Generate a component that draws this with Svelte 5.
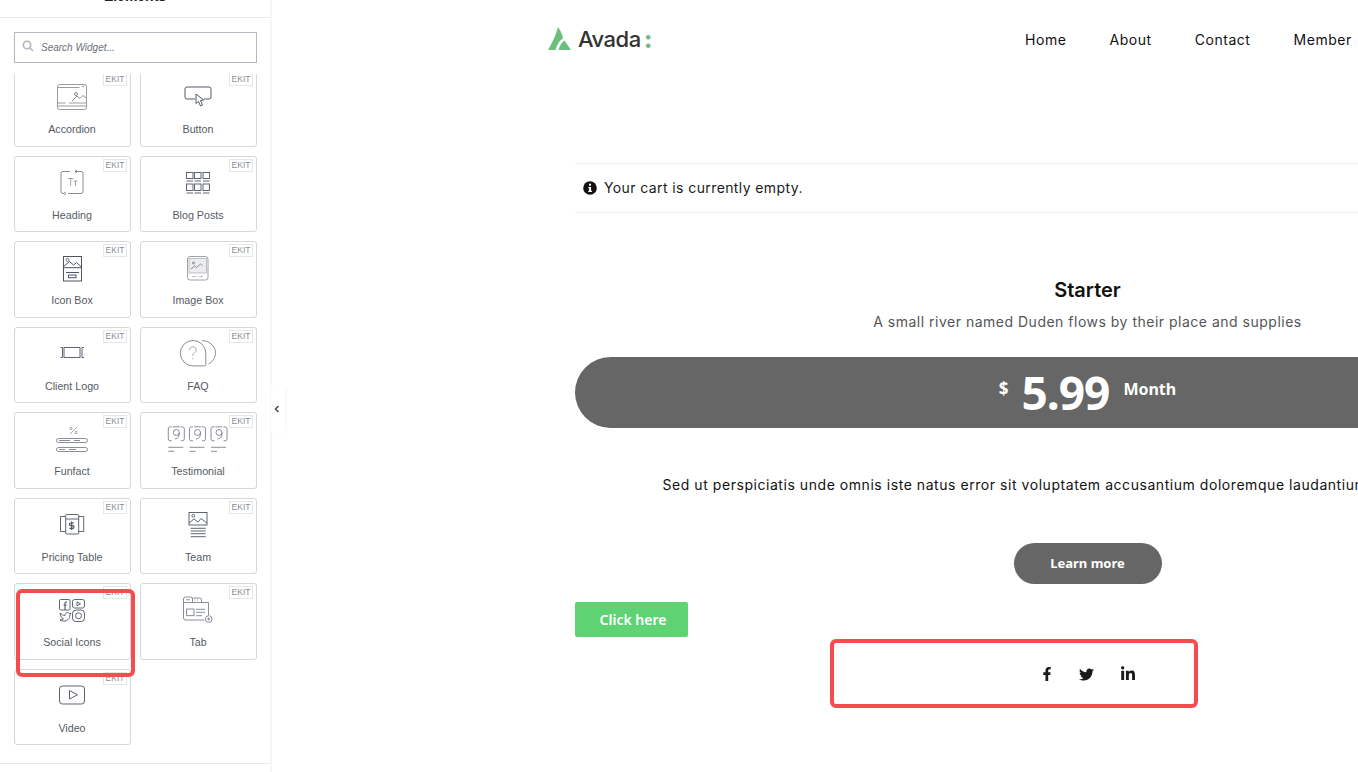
<script lang="ts">
  const widgets = [
    { name: "Accordion", icon: "accordion" },
    { name: "Button", icon: "button" },
    { name: "Heading", icon: "heading" },
    { name: "Blog Posts", icon: "blog" },
    { name: "Icon Box", icon: "iconbox" },
    { name: "Image Box", icon: "imagebox" },
    { name: "Client Logo", icon: "client" },
    { name: "FAQ", icon: "faq" },
    { name: "Funfact", icon: "funfact" },
    { name: "Testimonial", icon: "testimonial" },
    { name: "Pricing Table", icon: "pricing" },
    { name: "Team", icon: "team" },
    { name: "Social Icons", icon: "social" },
    { name: "Tab", icon: "tab" },
    { name: "Video", icon: "video" }
  ];
  const navItems = ["Home", "About", "Contact", "Member"];
  const counters = [27.3, 48.5, 70];
</script>

<div class="page">
  <aside class="sidebar">
    <div class="sidebar-title"><span>Elements</span></div>
    <div class="search">
      <svg width="12" height="12" viewBox="0 0 12 12" fill="none" stroke="#b4b7bb" stroke-width="1.6">
        <circle cx="5" cy="5" r="3.7" />
        <path d="M8 8l3 3" />
      </svg>
      <span>Search Widget...</span>
    </div>
    <div class="widget-scroll">
      <div class="widget-grid">
        {#each widgets as widget (widget.name)}
          <div class="widget">
            <span class="badge">EKIT</span>
            <svg class="widget-icon" width="115" height="50" viewBox="0 0 115 50" fill="none" stroke="#6b727d" stroke-width="0.8">
              {#if widget.icon === "accordion"}
                <rect x="42.5" y="13.5" width="29" height="25" rx="2" stroke="#7d848e" />
                <path d="M42.5 16.5h22M42.5 35h29M42.5 32h8M54 32h17" stroke="#7d848e" />
                <path d="M57 30l5-5 3 2.500 3-3 3 2.500" />
                <circle cx="61" cy="23" r="1.500" />
                <path d="M67 14.800l1.300 1 1.300-1" />
              {:else if widget.icon === "button"}
                <path d="M54 28h-8a2 2 0 0 1-2-2v-8a2 2 0 0 1 2-2h22a2 2 0 0 1 2 2v8a2 2 0 0 1-2 2h-5" stroke="#525a66" stroke-width="1" />
                <path d="M55 23v9.500l2.500-2 2 4.500 2-1-2-4.500 3.200-.5z" stroke="#525a66" stroke-width="1" />
              {:else if widget.icon === "heading"}
                <path d="M60 14.500h6a2 2 0 0 1 2 2v18a2 2 0 0 1-2 2H53M55 14.500h-7a2 2 0 0 0-2 2v18a2 2 0 0 0 2 2h1" />
                <path d="M62 13l-2 1.500 2 1.500M49 35l2 1.500-2 1.500" />
                <path d="M53 21.500h5.500M55.700 21.500V29M58.500 24h4M60.500 24v5" stroke="#8a9099" />
              {:else if widget.icon === "blog"}
                <g stroke="#4e5663" stroke-width="0.9">
                  <rect x="45.500" y="15.500" width="6.500" height="6" />
                  <rect x="53.500" y="15.500" width="6.500" height="6" />
                  <rect x="62" y="15.500" width="6.500" height="6" />
                  <path d="M45.500 24h6.500M53.500 24h6.500M62 24h6.500" />
                  <rect x="45.500" y="27" width="6.500" height="6.500" />
                  <rect x="53.500" y="27" width="6.500" height="6.500" />
                  <rect x="62" y="27" width="6.500" height="6.500" />
                  <path d="M45.500 36h6.500M53.500 36h6.500M62 36h6.500" />
                </g>
              {:else if widget.icon === "iconbox"}
                <g stroke="#4e5663" stroke-width="1">
                  <rect x="48.500" y="14.500" width="18" height="24.500" />
                  <path d="M48.500 25.700h18M48.500 24.500l6-5 4 3.500 3-2.500 5 4.500M51 30.500h13" />
                  <circle cx="52.500" cy="17.800" r="1.500" stroke-width="0.8" />
                  <rect x="53.500" y="33" width="7.500" height="2.700" />
                </g>
              {:else if widget.icon === "imagebox"}
                <rect x="46.500" y="14.500" width="20.500" height="23.500" rx="2.500" stroke="#858b94" />
                <rect x="48" y="16.500" width="17.500" height="14.500" fill="#ececee" stroke="#b0b4ba" />
                <path d="M50 27l3.500-3 2 1.500 4-3.500 2 1.500" stroke="#6b727d" />
                <circle cx="52.500" cy="21" r="1" />
                <path d="M51 34.500h4M58 34.500h4" stroke="#aab0b6" />
              {:else if widget.icon === "client"}
                <g stroke="#4e5663" stroke-width="0.9">
                  <rect x="49" y="19.500" width="16" height="10" />
                  <path d="M45.500 19.500H47.500v10H45.500M69 19.500H67v10H69" />
                </g>
              {:else if widget.icon === "faq"}
                <path d="M52 12.500a12.700 12.700 0 1 0 0 25.400h11.500a1.300 1.300 0 0 0 1.300-1.300V25.200A12.700 12.700 0 0 0 52 12.500z" />
                <path d="M61 12.500c8 .5 13.500 6 13.500 12 0 5.500-3 9.500-7 11.500" />
                <path d="M48.500 22a3.300 3.300 0 1 1 5 2.800c-1.300.8-1.800 1.500-1.800 3M51.700 30v1.200" stroke="#8b919a" />
              {:else if widget.icon === "funfact"}
                <rect x="41.500" y="25.500" width="31" height="4" rx="2" />
                <rect x="41.500" y="34.500" width="31" height="4" rx="2" />
                <path d="M55 21l7-7" stroke="#8b919a" />
                <circle cx="56" cy="15.500" r="1.200" stroke="#8b919a" />
                <circle cx="61" cy="19.500" r="1.200" stroke="#8b919a" />
                <path d="M44 27.500h11M59 27.500h6M44 36.500h6M54 36.500h7" />
              {:else if widget.icon === "testimonial"}
                {#each counters as x}
                  <g transform="translate({x} 0)">
                    <path d="M3.500 13.800H2a2 2 0 0 0-2 2v10a2 2 0 0 0 2 2h1.500M12.500 13.800H14a2 2 0 0 1 2 2v10a2 2 0 0 1-2 2h-1.500M4.500 13.800h7" />
                    <circle cx="8" cy="19.500" r="3" />
                    <path d="M11 19.500c0 4-1 6-4.500 6.500" />
                    <path d="M0 34.300h15M0 38.300h6" />
                  </g>
                {/each}
              {:else if widget.icon === "pricing"}
                <g stroke="#4e5663" stroke-width="0.9">
                  <path d="M50.700 17.500H45.500v15h5.200M63.700 17.500h5v15h-5" />
                  <rect x="50.700" y="15.500" width="13" height="19.500" rx="1" />
                  <path d="M50.700 20h13" />
                  <path d="M59 24h-3.200a1.300 1.300 0 0 0 0 2.700h1.800a1.300 1.300 0 0 1 0 2.700h-3.200M56.700 22.500V31" stroke-width="1.200" />
                </g>
              {:else if widget.icon === "team"}
                <g stroke="#4e5663" stroke-width="0.9">
                  <rect x="48" y="13.500" width="18" height="12.500" />
                  <path d="M48 24l5-4 4 3 3-3.500 6 4.500M49.700 29.300h15M49.700 32h15M49.700 34.700h15M49.700 37.700h15" />
                  <circle cx="52.300" cy="16.700" r="1.400" />
                </g>
              {:else if widget.icon === "social"}
                <g stroke="#4e5663" stroke-width="0.9">
                  <rect x="44.500" y="15.500" width="10.500" height="10.500" rx="1.200" />
                  <path d="M52 18h-1a1 1 0 0 0-1 1v7M48.500 21h3" stroke-width="1.100" />
                  <rect x="57.500" y="15.500" width="12" height="8.500" rx="2" />
                  <path d="M62 17.800l3.500 2-3.500 2z" />
                  <path d="M45 29c1.800 1.800 3.500 2.500 5 2.500 0-2.500 2.800-4 4.500-2l1.500-.5-1 1.700c0 4-3.200 6.500-6 6.500-1.500 0-3-.5-4-1.200 1.500 0 2.700-.4 3.500-1.200-1.800-.6-3.300-3-3.500-5.800z" />
                  <rect x="57.500" y="26" width="12" height="11.500" rx="3.500" />
                  <circle cx="63.500" cy="31.800" r="3" />
                </g>
              {:else if widget.icon === "tab"}
                <path d="M42.500 18.500h25M42.500 15a2 2 0 0 1 2-2h5a2 2 0 0 1 2 2v3.500M51.500 14h7a2 2 0 0 1 2 2v2.500M42.500 15v19a2 2 0 0 0 2 2h19M67.500 18.500V31" />
                <path d="M45 15.800h4M53.500 16h1M56 16h1" />
                <rect x="45.700" y="25" width="7.300" height="6.700" />
                <path d="M55 25.300h9M55 28.300h9M55 31.700h6" />
                <circle cx="67.700" cy="35" r="3.300" fill="#fff" />
                <path d="M67.700 33.500v3M66.200 35h3" />
              {:else if widget.icon === "video"}
                <rect x="44.500" y="16" width="25" height="18" rx="3" stroke="#5a6270" stroke-width="1" />
                <path d="M54.500 20.500l8 4.300-8 4.200z" stroke="#5a6270" stroke-width="1" />
              {/if}
            </svg>
            <span class="widget-name">{widget.name}</span>
          </div>
        {/each}
      </div>
    </div>
    <div class="sidebar-foot"></div>
  </aside>

  <button class="collapse" aria-label="Collapse">
    <svg width="6" height="8" viewBox="0 0 6 8" fill="none" stroke="#444c56" stroke-width="1.5">
      <path d="M4.500 1L1.500 4l3 3" />
    </svg>
  </button>

  <main class="main">
    <header class="topbar">
      <div class="logo">
        <svg width="24" height="24" viewBox="0 0 24 24">
          <path d="M10 0c2.500 3.500 4.500 7.500 5 11.500-3.500 2-6 6-7.500 11.500H0C4 16 8 8 10 0z" fill="#6cc07d" />
          <path d="M16.500 13.500L23 23H10.500c1-4 3-7.500 6-9.500z" fill="#6cc07d" />
        </svg>
        <span class="logo-word">Avada</span><span class="logo-dot">:</span>
      </div>
      <nav class="nav">
        {#each navItems as item}
          <span>{item}</span>
        {/each}
      </nav>
    </header>

    <div class="content">
      <div class="cart-notice">
        <svg width="14" height="14" viewBox="0 0 14 14">
          <circle cx="7" cy="7" r="6.800" fill="#111" />
          <rect x="6" y="2.700" width="2" height="2" fill="#fff" />
          <path d="M5.300 6h2.800v3.800h.8v1.200H5.300V9.800h.8V7.200h-.8z" fill="#fff" />
        </svg>
        <span>Your cart is currently empty.</span>
      </div>

      <section class="plan">
        <h2>Starter</h2>
        <p class="plan-sub">A small river named Duden flows by their place and supplies</p>
        <div class="price-bar">
          <span class="currency">$</span>
          <span class="amount">5.99</span>
          <span class="period">Month</span>
        </div>
        <p class="plan-text">Sed ut perspiciatis unde omnis iste natus error sit voluptatem accusantium doloremque laudantium, totam rem aperiam</p>
        <a class="learn" href="#learn">Learn more</a>
      </section>

      <a class="click" href="#click">Click here</a>

      <div class="social">
        <svg width="14" height="14" viewBox="0 0 320 512" fill="#1a1a1a">
          <path d="M279 288l14-93h-89v-60c0-25 12-50 52-50h41V6s-37-6-72-6c-73 0-121 44-121 125v70H23v93h81v224h100V288z" />
        </svg>
        <svg width="15" height="15" viewBox="0 0 512 512" fill="#1a1a1a">
          <path d="M459 152c.3 4.500.3 9 .3 13.600 0 138.700-105.600 298.600-298.600 298.600-59.500 0-114.700-17.200-161.100-47.100 8.400 1 16.600 1.300 25.300 1.300 49.100 0 94.200-16.600 130.300-44.800-46.100-1-84.800-31.200-98.100-72.800 6.500 1 13 1.600 19.800 1.600 9.400 0 18.800-1.300 27.600-3.600-48.100-9.700-84.100-52-84.100-103v-1.300c14 7.800 30.200 12.700 47.400 13.300-28.300-18.800-46.800-51-46.800-87.400 0-19.500 5.200-37.400 14.300-53 51.700 63.700 129.300 105.300 216.400 109.800-1.600-7.800-2.600-15.900-2.600-24 0-57.800 46.800-104.900 104.900-104.900 30.200 0 57.500 12.700 76.700 33.100 23.700-4.500 46.500-13.300 66.600-25.300-7.800 24.200-24.400 44.800-46.100 57.800 21.100-2.300 41.600-8.100 60.400-16.200-14.300 20.800-32.200 39.300-52.600 54.200z" />
        </svg>
        <svg width="16" height="16" viewBox="0 0 448 512" fill="#1a1a1a">
          <path d="M100 448H7V149h93zM54 108C24 108 0 83 0 54a54 54 0 0 1 107 0c0 29-24 54-53 54zm394 340h-93V302c0-35-1-79-48-79-48 0-56 38-56 77v148h-93V149h89v41h1c12-24 43-48 88-48 94 0 111 62 111 142z" />
        </svg>
      </div>
    </div>
  </main>

  <div class="mark mark-widget"></div>
  <div class="mark mark-social"></div>
</div>

<style>
  :global(body) {
    margin: 0;
    background: #fff;
    overflow: hidden;
  }

  .page {
    position: relative;
    display: flex;
    width: 1358px;
    height: 772px;
    overflow: hidden;
    background: #fff;
  }

  .sidebar {
    display: flex;
    flex-direction: column;
    flex: none;
    width: 272px;
    height: 772px;
    box-sizing: border-box;
    border-right: 2px solid #f5f6f7;
    font-family: "Liberation Sans", Arial, sans-serif;
  }

  .sidebar-title {
    display: flex;
    justify-content: center;
    align-items: flex-end;
    height: 18px;
    box-sizing: border-box;
    border-bottom: 1px solid #e6e8ea;
    overflow: hidden;
  }

  .sidebar-title span {
    margin-bottom: 13px;
    font-size: 14px;
    font-weight: 700;
    line-height: 16px;
    color: #222;
  }

  .search {
    display: flex;
    align-items: center;
    gap: 7px;
    box-sizing: content-box;
    width: 234px;
    height: 29px;
    margin: 14px 0 0 14px;
    padding: 0 0 0 7px;
    border: 1px solid #b1b8c1;
    font-size: 10px;
    font-style: italic;
    color: #6b6f75;
  }

  .search svg {
    margin-top: -4px;
  }

  .widget-scroll {
    flex: none;
    height: 689px;
    margin-top: 11px;
    overflow: hidden;
  }

  .widget-grid {
    display: grid;
    grid-template-columns: 117px 117px;
    grid-auto-rows: 76.5px;
    gap: 9px;
    margin: -4px 0 0 14px;
  }

  .widget {
    position: relative;
    box-sizing: border-box;
    border: 1px solid #d5d8dc;
    border-radius: 3px;
    background: #fff;
  }

  .badge {
    position: absolute;
    top: 2px;
    right: 3px;
    width: 22px;
    height: 11px;
    border: 1px solid #e4e6e8;
    font-size: 8.5px;
    line-height: 11px;
    text-align: center;
    color: #8a8e94;
  }

  .widget-icon {
    position: absolute;
    top: 0;
    left: 0;
  }

  .widget-name {
    position: absolute;
    top: 51px;
    left: 0;
    right: 1px;
    font-size: 10.7px;
    line-height: 14px;
    text-align: center;
    color: #555b64;
  }

  .sidebar-foot {
    border-top: 1px solid #e6e8ea;
  }

  .collapse {
    position: absolute;
    left: 271px;
    top: 386px;
    display: flex;
    align-items: center;
    justify-content: center;
    width: 14px;
    height: 46px;
    padding: 0 2px 0 0;
    border: 0;
    border-radius: 0 3px 3px 0;
    background: #fff;
    box-shadow: 2px 0 3px rgba(0, 0, 0, 0.03);
  }

  .main {
    flex: none;
    width: 1086px;
    overflow: hidden;
    font-family: Inter, "Liberation Sans", sans-serif;
    color: #111;
  }

  .topbar {
    display: flex;
    align-items: center;
    height: 78px;
    padding-left: 276px;
  }

  .logo {
    display: flex;
    flex: none;
    align-items: center;
    width: 477px;
  }

  .logo svg {
    margin-right: 6px;
  }

  .logo-word {
    font-size: 22px;
    font-weight: 500;
    letter-spacing: -0.5px;
    color: #333;
  }

  .logo-dot {
    margin-left: 3px;
    font-size: 25px;
    font-weight: 800;
    line-height: 22px;
    color: #6cc07d;
  }

  .nav {
    display: flex;
    flex: none;
    gap: 43px;
    font-size: 14px;
    font-weight: 400;
    letter-spacing: 0.55px;
    white-space: nowrap;
  }

  .content {
    width: 1025px;
    margin: 85px 0 0 303px;
  }

  .cart-notice {
    display: flex;
    align-items: center;
    gap: 7px;
    box-sizing: content-box;
    height: 47px;
    padding: 0 0 1px 8px;
    border-top: 1px solid #f0f0f0;
    border-bottom: 1px solid #f0f0f0;
    font-size: 14px;
    letter-spacing: 0.4px;
    color: #1a1a1a;
  }

  .plan {
    display: flex;
    flex-direction: column;
    align-items: center;
    margin-top: 64px;
  }

  .plan h2 {
    margin: 0;
    font-size: 20px;
    font-weight: 600;
    line-height: 26px;
    color: #111;
  }

  .plan-sub {
    margin: 9px 0 0;
    font-size: 14px;
    line-height: 20px;
    letter-spacing: 0.5px;
    color: #555;
  }

  .price-bar {
    display: flex;
    align-items: center;
    justify-content: center;
    width: 100%;
    height: 71px;
    margin-top: 25px;
    border-radius: 36px;
    background: #666;
    color: #fff;
    font-family: "Noto Sans", sans-serif;
  }

  .currency {
    margin: -8px 13px 0 0;
    font-size: 17px;
    font-weight: 700;
  }

  .amount {
    font-size: 46px;
    font-weight: 700;
    line-height: 71px;
    letter-spacing: -1px;
  }

  .period {
    margin: -8px 0 0 14px;
    font-size: 16px;
    font-weight: 700;
  }

  .plan-text {
    width: 850px;
    margin: 46px 0 0;
    font-size: 14px;
    line-height: 22px;
    letter-spacing: 0.55px;
    white-space: nowrap;
    color: #111;
  }

  .learn {
    display: flex;
    align-items: center;
    justify-content: center;
    box-sizing: border-box;
    width: 148px;
    height: 41px;
    margin-top: 47px;
    padding-bottom: 1px;
    border-radius: 21px;
    background: #666;
    color: #fff;
    font-family: "Noto Sans", sans-serif;
    font-size: 13px;
    font-weight: 700;
    text-decoration: none;
  }

  .click {
    display: flex;
    align-items: center;
    justify-content: center;
    box-sizing: border-box;
    width: 113px;
    height: 35px;
    margin-top: 18px;
    padding-left: 3px;
    border-radius: 2px;
    background: #5fd273;
    color: #fff;
    font-family: "Noto Sans", sans-serif;
    font-size: 14px;
    font-weight: 600;
    text-decoration: none;
  }

  .social {
    display: flex;
    align-items: center;
    justify-content: center;
    gap: 25.5px;
    height: 16px;
    margin-top: 29px;
  }

  .mark {
    position: absolute;
    box-sizing: border-box;
    border: 4px solid #f54d4d;
    border-radius: 6px;
  }

  .mark-widget {
    left: 16px;
    top: 589px;
    width: 119px;
    height: 88px;
  }

  .mark-social {
    left: 830px;
    top: 639px;
    width: 368px;
    height: 69px;
  }
</style>
